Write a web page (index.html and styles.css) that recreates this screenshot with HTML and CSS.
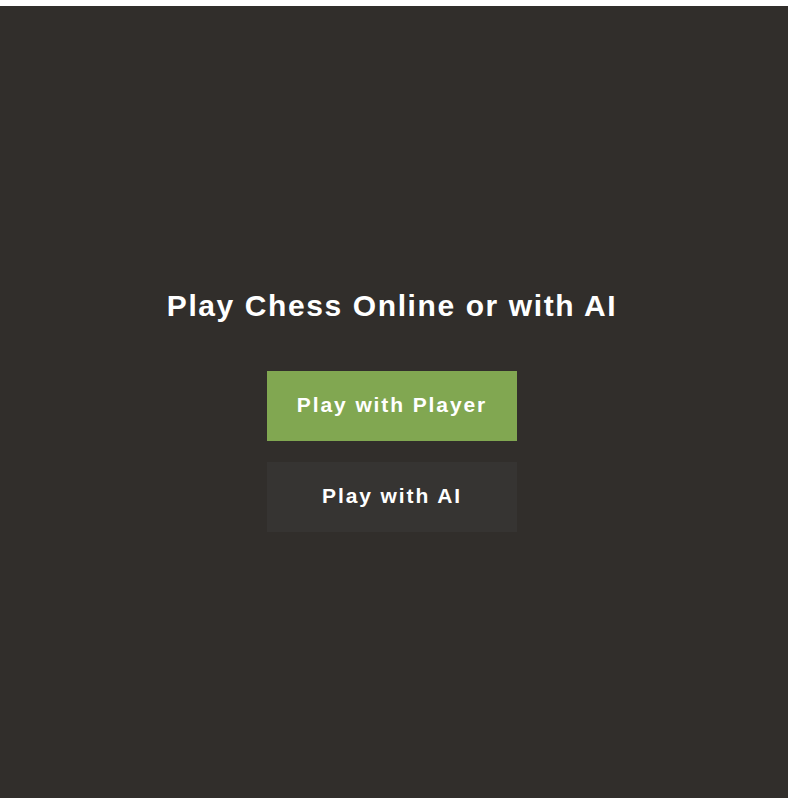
FILE: index.html
```html
<!DOCTYPE html>
<html>
<head>
<meta charset="utf-8">
<link rel="stylesheet" href="styles.css">
</head>
<body>
<main class="screen">
  <h1 class="title">Play Chess Online or with AI</h1>
  <div class="actions">
    <button class="btn btn-green">Play with Player</button>
    <button class="btn btn-dark">Play with AI</button>
  </div>
</main>
</body>
</html>
```
FILE: styles.css
```css
html, body {
  margin: 0;
  padding: 0;
  background: #ffffff;
}
body {
  padding-top: 6px;
  font-family: "Liberation Sans", Arial, sans-serif;
}
.screen {
  box-sizing: border-box;
  height: 792px;
  padding: 282px 4px 0 0;
  background: #312e2b;
  display: flex;
  flex-direction: column;
  align-items: center;
  color: #ffffff;
}
.title {
  margin: 0 0 47px 0;
  font-size: 30px;
  line-height: 36px;
  font-weight: bold;
  letter-spacing: 1.6px;
}
.actions {
  display: flex;
  flex-direction: column;
  gap: 21px;
}
.btn {
  width: 250px;
  height: 70px;
  border: none;
  color: #ffffff;
  font-family: "Liberation Sans", Arial, sans-serif;
  font-size: 21px;
  font-weight: bold;
  letter-spacing: 1.9px;
  padding: 0 0 3px 0;
}
.btn-green { background: #81a751; }
.btn-dark { background: #363432; }
```
